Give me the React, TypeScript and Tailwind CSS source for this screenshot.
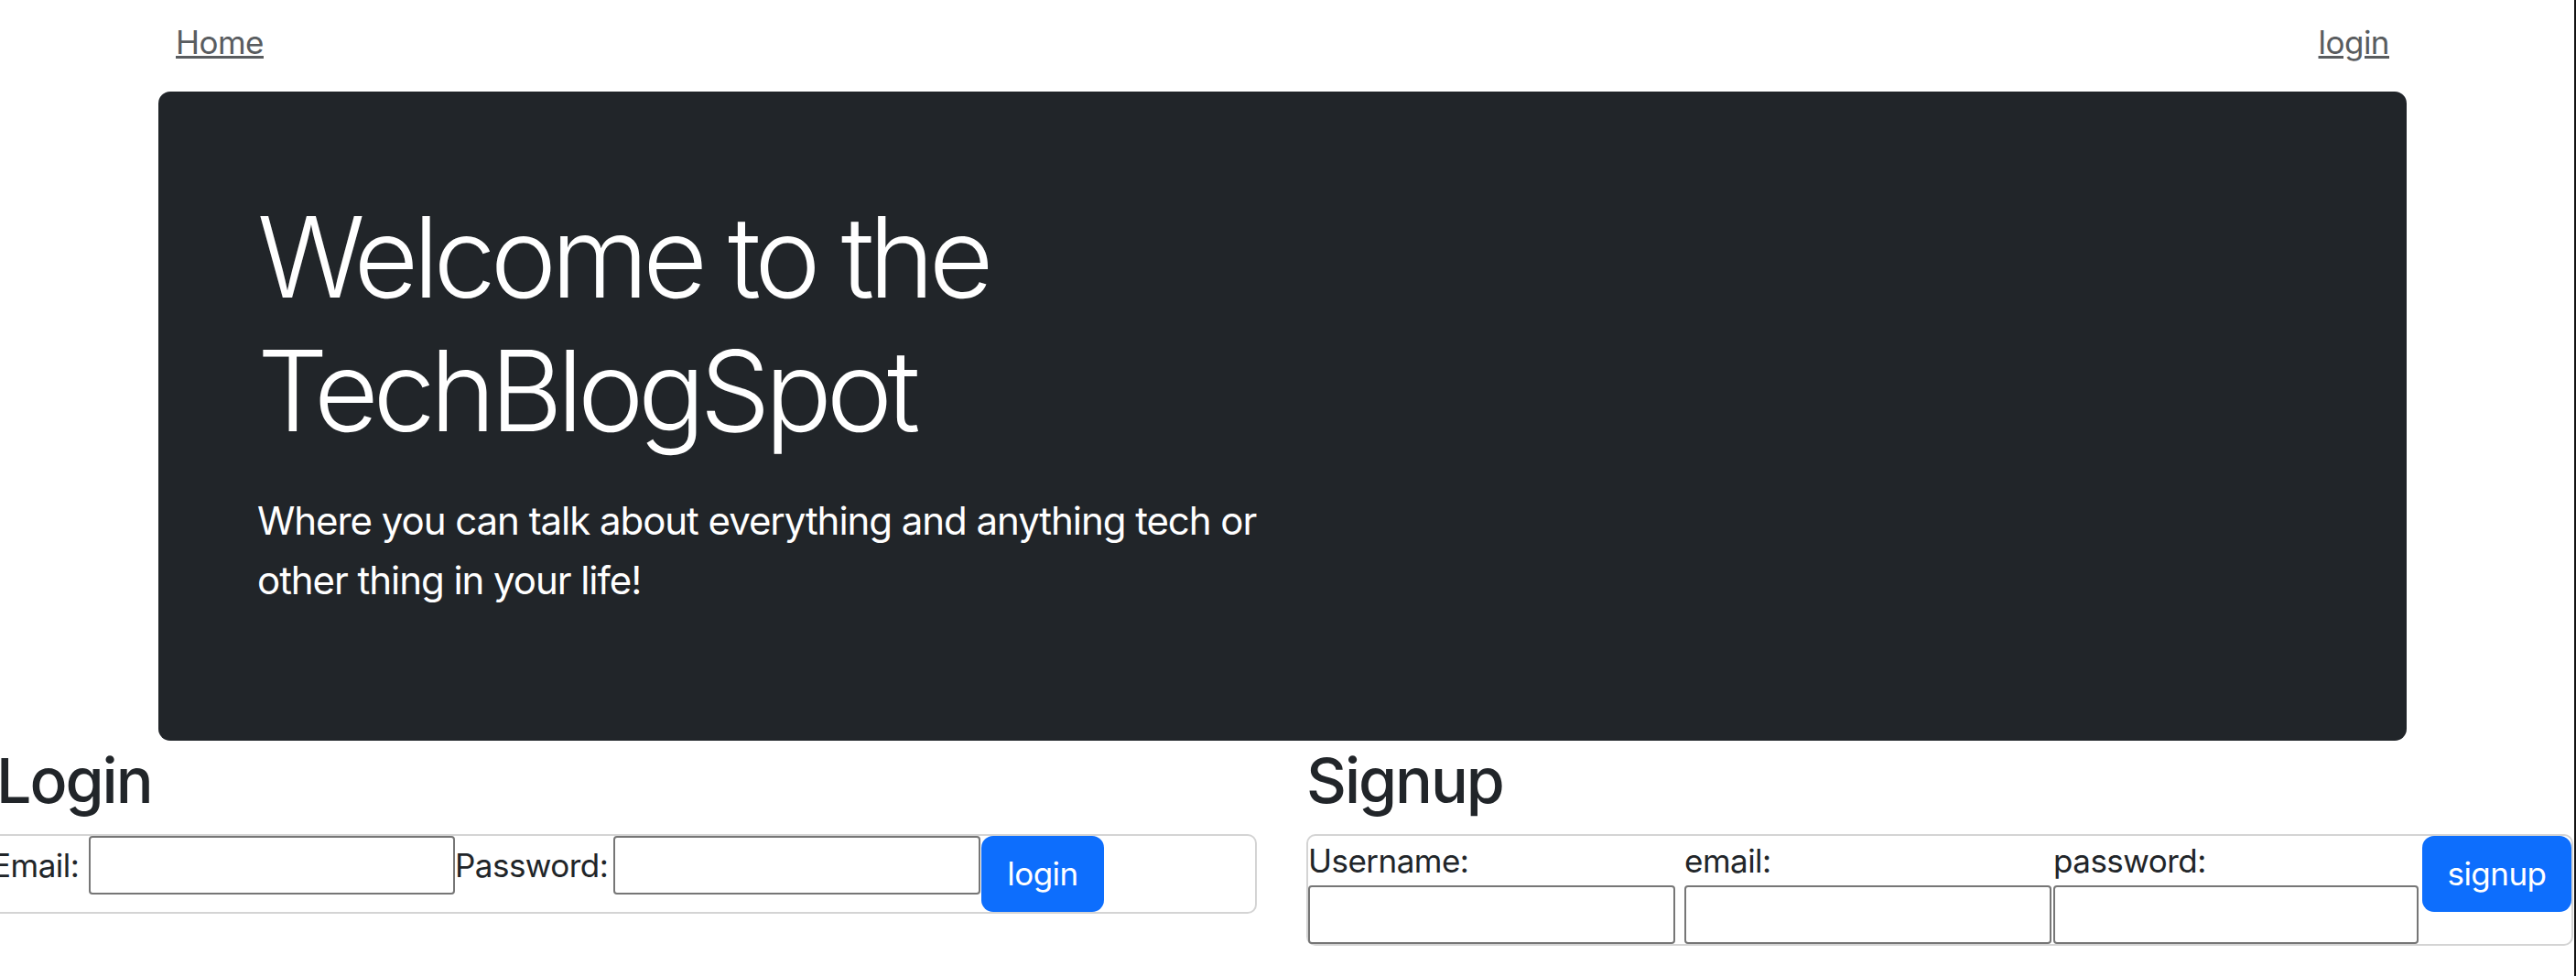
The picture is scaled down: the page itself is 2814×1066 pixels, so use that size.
const font = "font-['Inter','Liberation_Sans',sans-serif]";

function TextInput({ className = "" }: { className?: string }) {
  return (
    <input
      type="text"
      className={`h-[64px] rounded-[4px] border-2 border-[#767676] bg-white outline-none ${className}`}
    />
  );
}

function LoginForm() {
  return (
    <div className="ml-[-11px] w-[1384px]">
      <h2 className="ml-[7px] mb-[18px] text-[68px] font-medium leading-[82px] tracking-[-0.03em] text-[#212529]">Login</h2>
      <form className="flex items-start rounded-[10px] border-2 border-[#d4d4d4]">
        <label className="mt-[6px] w-[106px] shrink-0 text-[35px] leading-[52px] tracking-[-0.015em] text-[#212529]">Email:</label>
        <TextInput className="w-[400px]" />
        <label className="mt-[6px] w-[173px] shrink-0 text-[35px] leading-[52px] tracking-[-0.015em] text-[#212529]">Password:</label>
        <TextInput className="w-[401px]" />
        <button
          type="button"
          className="ml-[1px] h-[83px] w-[134px] rounded-[13px] bg-[#0d6efd] text-[35px] tracking-[-0.015em] text-white"
        >
          login
        </button>
      </form>
    </div>
  );
}

function SignupField({ label, className = "" }: { label: string; className?: string }) {
  return (
    <div className={`flex flex-col ${className}`}>
      <label className="h-[54px] text-[35px] leading-[54px] tracking-[-0.015em] text-[#212529]">{label}</label>
      <TextInput className="w-full" />
    </div>
  );
}

function SignupForm() {
  return (
    <div className="ml-[54px] w-[1384px]">
      <h2 className="mb-[18px] text-[68px] font-medium leading-[82px] tracking-[-0.03em] text-[#212529]">Signup</h2>
      <form className="flex items-start rounded-[10px] border-2 border-[#d4d4d4]">
        <SignupField label="Username:" className="w-[401px]" />
        <SignupField label="email:" className="ml-[10px] w-[401px]" />
        <SignupField label="password:" className="ml-[2px] w-[399px]" />
        <button
          type="button"
          className="ml-[4px] h-[83px] w-[163px] rounded-[13px] bg-[#0d6efd] text-[35px] tracking-[-0.015em] text-white"
        >
          signup
        </button>
      </form>
    </div>
  );
}

export default function App() {
  return (
    <div className={`${font} h-[1066px] w-full overflow-hidden border-r-2 border-[#141414] bg-white`}>
      <div className="ml-[173px] w-[2456px]">
        <nav className="flex h-[100px] justify-between px-[19px] pt-[20px] text-[35px] leading-[52px] tracking-[-0.015em]">
          <a href="#" className="text-[#595c5f] underline">Home</a>
          <a href="#" className="text-[#595c5f] underline">login</a>
        </nav>
        <section className="h-[709px] rounded-[13px] bg-[#212529] pl-[108px] pt-[108px] text-white">
          <h1 className="w-[1200px] text-[122px] font-light leading-[146px] tracking-[-0.05em]">
            Welcome to the
            <br />
            TechBlogSpot
          </h1>
          <p className="mt-[36px] w-[1130px] text-[42px] leading-[65px] tracking-[-0.025em]">
            Where you can talk about everything and anything tech or other thing in your life!
          </p>
        </section>
      </div>
      <div className="flex pt-[2px]">
        <LoginForm />
        <SignupForm />
      </div>
    </div>
  );
}
